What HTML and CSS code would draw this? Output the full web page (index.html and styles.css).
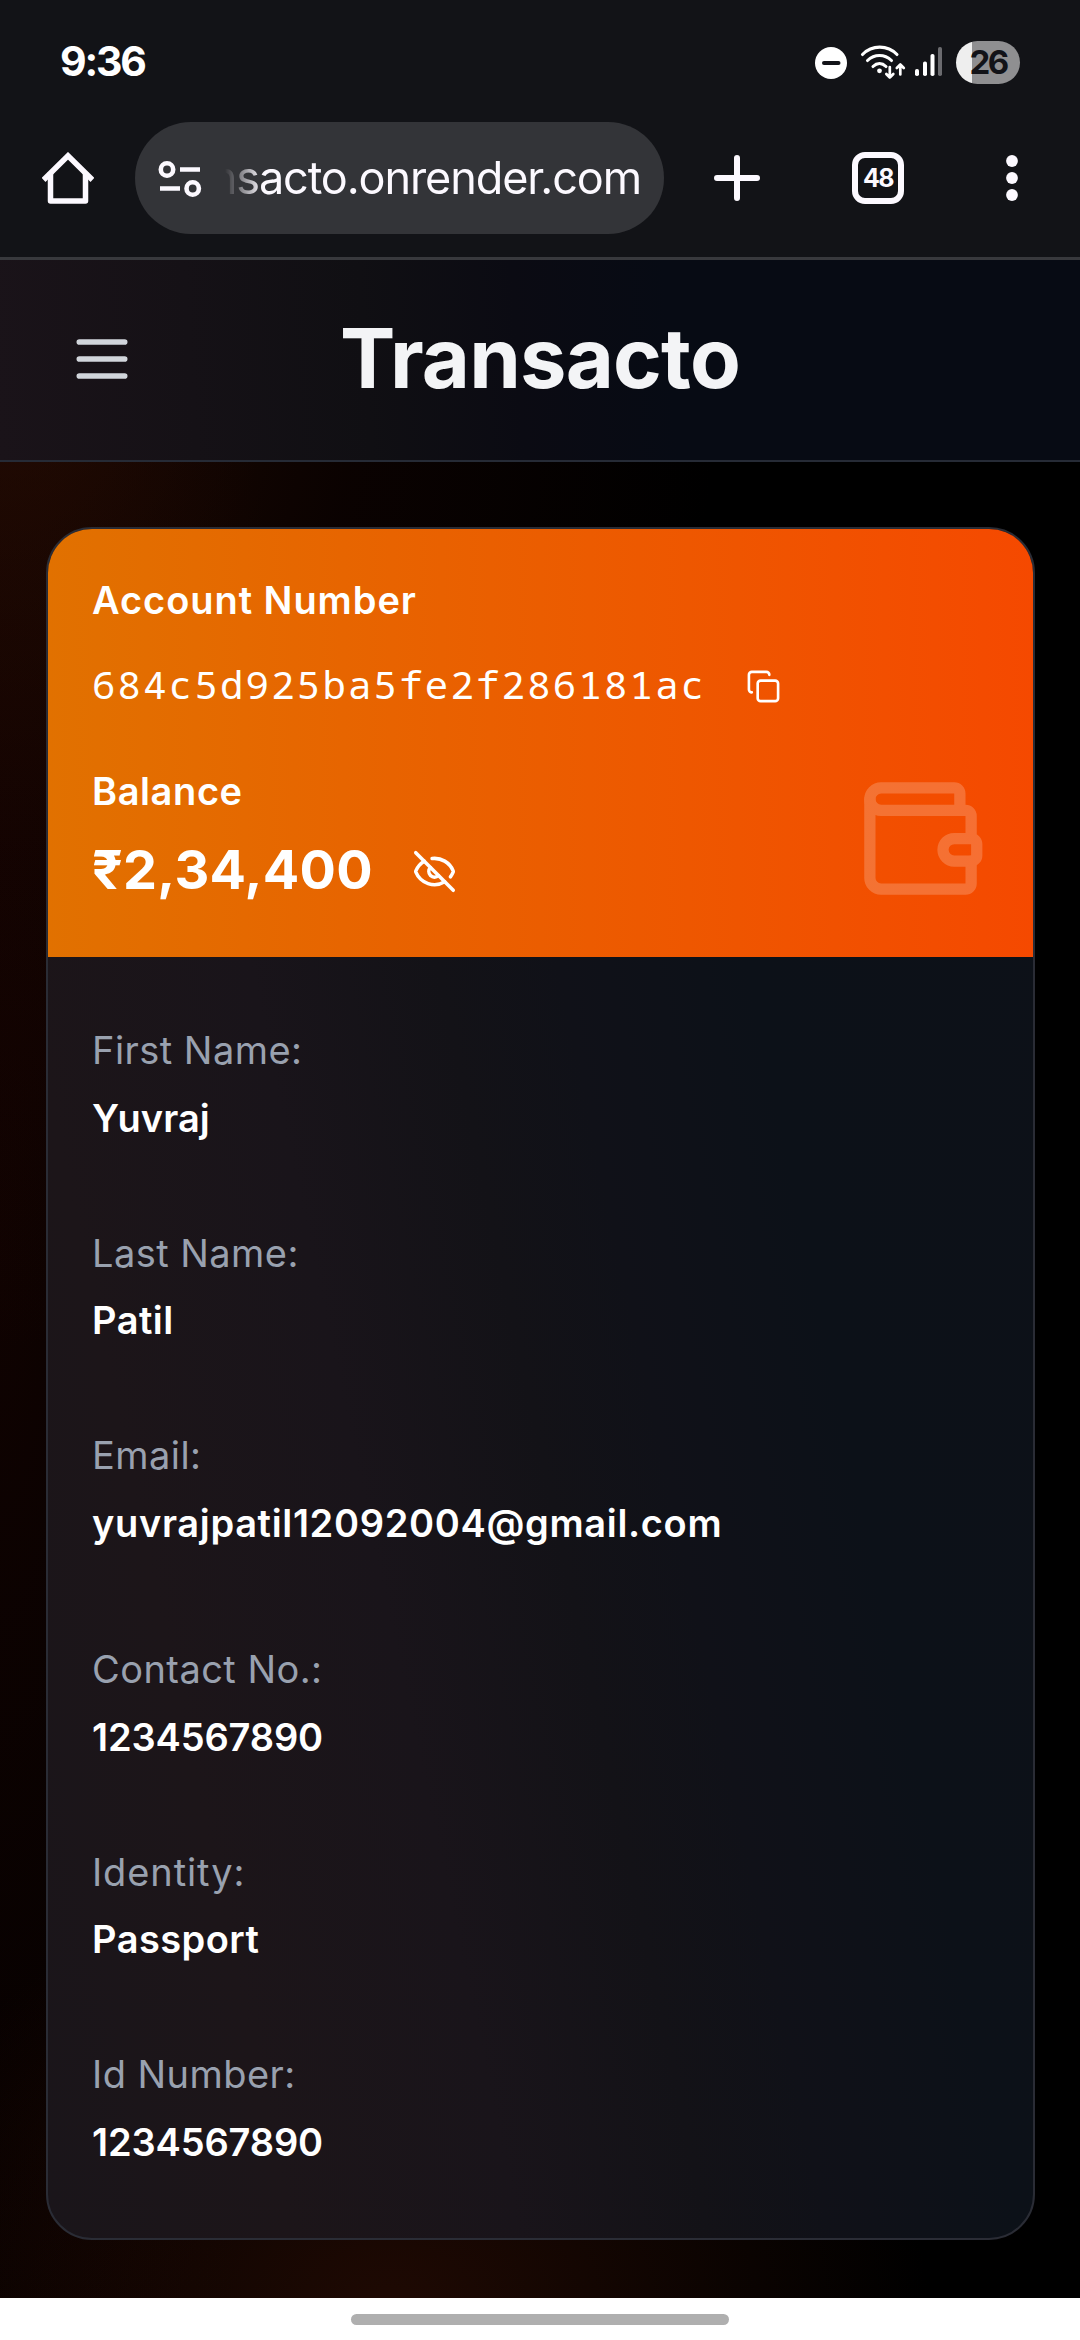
FILE: index.html
```html
<!DOCTYPE html>
<html lang="en">
<head>
<meta charset="utf-8">
<title>Transacto</title>
<link rel="stylesheet" href="styles.css">
</head>
<body>
<div class="status">
  <span class="clock">9:36</span>
  <div class="indicators">
    <svg class="dnd" viewBox="0 0 32 32"><circle cx="16" cy="16" r="16" fill="#fff"/><path d="M9 16h14.500" stroke="#121318" stroke-width="4" stroke-linecap="round"/></svg>
    <svg class="wifi" viewBox="0 0 46 36" fill="none" stroke="#fff" stroke-width="3.100" stroke-linecap="round" stroke-linejoin="round">
      <path d="M2.500 10.500C12 0.700 27.500 0.700 37 10.500"/><path d="M7.500 16.500C14.500 9.800 24.500 9.800 31.500 16.500"/><path d="M13 22.500C17 18.700 22 18.700 26 22.500"/>
      <circle cx="19.500" cy="26.800" r="2.400" fill="#fff" stroke="none"/>
      <path stroke-width="2.700" d="M29.800 23v10.500M26.300 30l3.500 3.500 3.500-3.500M40.300 30.500V20.500M36.800 24l3.500-3.500 3.500 3.500"/>
    </svg>
    <svg class="signal" viewBox="0 0 28 32" fill="#fff"><rect x="0" y="23" width="4" height="7" rx="1.800"/><rect x="8" y="15.500" width="4" height="14.500" rx="1.800"/><rect x="15.500" y="8" width="4" height="22" rx="1.800"/><rect x="23" y="1" width="4" height="29" rx="1.800" fill="#6b6b6f"/></svg>
    <span class="battery">26</span>
  </div>
</div>

<div class="toolbar">
  <svg class="home" viewBox="0 0 52 52" fill="none" stroke="#fcf9ff" stroke-width="5.500" stroke-linejoin="round" stroke-linecap="square"><path stroke-linejoin="miter" d="M3.500 26 26 3.800 48.500 26"/><path d="M8.500 23v26h35V23"/></svg>
  <div class="omnibox">
    <svg class="tune" viewBox="0 0 44 38" fill="none" stroke="#fcf9ff" stroke-width="4.600"><circle cx="9" cy="9.500" r="6.200"/><path d="M22 9.500h20M2 28.500h20"/><circle cx="34.700" cy="28.500" r="6.200"/></svg>
    <div class="url"><span>nsacto.onrender.com</span></div>
  </div>
  <svg class="plus" viewBox="0 0 46 46" stroke="#fcf9ff" stroke-width="6" stroke-linecap="round"><path d="M23 3v40M3 23h40"/></svg>
  <span class="tabs">48</span>
  <svg class="dots" viewBox="0 0 12 48" fill="#fcf9ff"><circle cx="6" cy="7" r="5.900"/><circle cx="6" cy="24" r="5.900"/><circle cx="6" cy="41" r="5.900"/></svg>
</div>

<div class="page">
  <header class="header">
    <svg class="menu" viewBox="0 0 24 24" fill="none" stroke="#d1d5db" stroke-width="2" stroke-linecap="round"><path d="M4 6h16M4 12h16M4 18h16"/></svg>
    <h1 class="brand">Transacto</h1>
  </header>

  <main class="card">
    <section class="summary">
      <div class="title t-account">Account Number</div>
      <div class="account-row">
        <span class="account">684c5d925ba5fe2f286181ac</span>
        <svg class="copy" viewBox="0 0 24 24" fill="none" stroke="#fff" stroke-width="1.800" stroke-linecap="round" stroke-linejoin="round"><rect x="8" y="8" width="14" height="14" rx="2"/><path d="M4 16c-1.100 0-2-.9-2-2V4c0-1.100.9-2 2-2h10c1.100 0 2 .9 2 2"/></svg>
      </div>
      <div class="balance-row">
        <div>
          <div class="title t-balance">Balance</div>
          <div class="amount-row">
            <span class="amount">₹2,34,400</span>
            <svg class="eye" viewBox="0 0 24 24" fill="none" stroke="#fff" stroke-width="1.900" stroke-linecap="round" stroke-linejoin="round"><path d="M10.733 5.076a10.744 10.744 0 0 1 11.205 6.575 1 1 0 0 1 0 .696 10.747 10.747 0 0 1-1.444 2.490"/><path d="M14.084 14.158a3 3 0 0 1-4.242-4.242"/><path d="M17.479 17.499a10.750 10.750 0 0 1-15.417-5.151 1 1 0 0 1 0-.696 10.750 10.750 0 0 1 4.446-5.143"/><path d="m2 2 20 20"/></svg>
          </div>
        </div>
        <svg class="wallet" viewBox="0 0 24 24" fill="none" stroke="#fff" stroke-width="2" stroke-linecap="round" stroke-linejoin="round"><path d="M19 7V4a1 1 0 0 0-1-1H5a2 2 0 0 0 0 4h15a1 1 0 0 1 1 1v4h-3a2 2 0 0 0 0 4h3a1 1 0 0 0 1-1v-2a1 1 0 0 0-1-1"/><path d="M3 5v14a2 2 0 0 0 2 2h15a1 1 0 0 0 1-1v-4"/></svg>
      </div>
    </section>
    <dl class="details">
      <div class="item"><dt>First Name:</dt><dd class="v-first">Yuvraj</dd></div>
      <div class="item"><dt>Last Name:</dt><dd>Patil</dd></div>
      <div class="item item-email"><dt>Email:</dt><dd class="v-email">yuvrajpatil12092004@gmail.com</dd></div>
      <div class="item"><dt>Contact No.:</dt><dd class="v-digits">1234567890</dd></div>
      <div class="item"><dt class="l-identity">Identity:</dt><dd>Passport</dd></div>
      <div class="item"><dt>Id Number:</dt><dd class="v-digits">1234567890</dd></div>
    </dl>
  </main>
</div>
<div class="navbar"><div class="handle"></div></div>
</body>
</html>
```
FILE: styles.css
```css
* { box-sizing: border-box; }
html, body { margin: 0; padding: 0; }
body {
  width: 1080px; height: 2340px; overflow: hidden;
  display: flex; flex-direction: column;
  background: #121317; color: #fff;
  font-family: Inter, "Liberation Sans", sans-serif;
}
svg { display: block; flex: none; }

.status { height: 122px; padding: 0 60px; display: flex; justify-content: space-between; align-items: center; }
.clock { font-size: 41px; font-weight: 700; line-height: 50px; letter-spacing: -2.200px; }
.indicators { display: flex; align-items: center; height: 42px; margin-top: 2px; }
.dnd { width: 32px; height: 32px; margin-right: 13px; margin-top: 2px; }
.wifi { width: 46px; height: 36px; margin-right: 9px; }
.signal { width: 28px; height: 32px; margin-right: 13px; }
.battery {
  width: 64px; height: 43px; border-radius: 22px;
  background: linear-gradient(90deg, #eeeeee 16px, #8f8f91 16px);
  color: #121318; font-size: 33px; font-weight: 700; line-height: 43px; text-align: center; letter-spacing: -2.500px;
}

.toolbar { height: 138px; flex: none; display: flex; align-items: flex-start; padding: 0 0 0 42px; border-bottom: 3px solid #38393d; }
.home { width: 52px; height: 52px; margin: 30px 41px 0 0; }
.omnibox { width: 529px; height: 112px; border-radius: 56px; background: #333438; display: flex; align-items: center; padding-left: 23px; }
.tune { width: 44px; height: 38px; margin-top: 1px; }
.url {
  margin-left: 23px; width: 424px; overflow: hidden; display: flex; justify-content: flex-end; padding-right: 8px;
  -webkit-mask-image: linear-gradient(90deg, transparent 0, #000 38px);
  mask-image: linear-gradient(90deg, transparent 0, #000 38px);
}
.url span { font-size: 45px; line-height: 60px; letter-spacing: -1.100px; color: #fcf9ff; white-space: nowrap; }
.plus { width: 46px; height: 46px; margin: 33px 0 0 50px; }
.tabs {
  width: 52px; height: 52px; margin: 30px 0 0 92px; border: 6px solid #fcf9ff; border-radius: 13px;
  font-size: 25px; font-weight: 700; line-height: 41px; text-align: center; color: #fcf9ff; letter-spacing: -1.500px;
}
.dots { width: 12px; height: 48px; margin: 32px 0 0 102px; }

.page {
  height: 2038px; flex: none;
  background:
    radial-gradient(ellipse 720px 1000px at 0 90px, rgba(76, 26, 6, .40), rgba(64, 12, 5, .16) 50%, transparent 100%),
    radial-gradient(ellipse 300px 1600px at 0 1000px, rgba(64, 10, 4, .24), transparent 100%),
    radial-gradient(ellipse 540px 460px at 390px 2060px, rgba(78, 24, 8, .40), transparent 100%),
    #000;
}
.header {
  height: 202px; border-bottom: 2px solid #262b36; display: grid; grid-template-columns: 135px 1fr 135px; align-items: center;
  background: linear-gradient(86deg, #1a1319 0%, #151116 18%, #100f13 34%, #0b0b13 48%, #070b14 62%, #070b14 100%);
}
.menu { width: 68px; height: 68px; margin-left: 68px; margin-top: -2px; }
.brand { margin: -5px 0 0; font-size: 83px; line-height: 100px; font-weight: 700; color: #f3f4f6; text-align: center; letter-spacing: -.800px; }

.card {
  width: 989px; height: 1713px; margin: 65px 0 0 46px; border: 2px solid #2a2c35; border-radius: 46px; overflow: hidden;
  background: linear-gradient(78deg, #1a151a 0%, #1c1519 18%, #19141a 35%, #131217 49%, #101118 58%, #0c1118 72%, #0d1118 100%);
}
.summary { height: 428px; padding: 43px 45px 51px 44px; background: linear-gradient(90deg, #e17100, #f54900); }
.title { font-size: 38px; line-height: 56px; font-weight: 600; white-space: nowrap; }
.t-account { letter-spacing: .950px; }
.t-balance { letter-spacing: .600px; }
.account-row { display: flex; align-items: center; height: 56px; margin-top: 28px; }
.account { font: 39px/56px "Noto Sans Mono", "DejaVu Sans Mono", monospace; letter-spacing: 2.200px; }
.copy { width: 35px; height: 35px; margin: 5px 0 0 40px; }
.balance-row { display: flex; justify-content: space-between; align-items: flex-end; margin-top: 51px; height: 143px; }
.amount-row { display: flex; align-items: center; margin: 17px 0 2px; height: 68px; }
.amount { font-size: 54px; line-height: 68px; font-weight: 700; letter-spacing: .250px; }
.eye { width: 45px; height: 45px; margin-left: 39px; margin-top: 3px; }
.wallet { width: 135px; height: 135px; opacity: .2; }

.details { margin: 0; padding: 65px 44px 0; }
.item { height: 202.500px; }
.item-email { height: 214px; }
dt, dd { margin: 0; font-size: 38px; line-height: 56px; white-space: nowrap; letter-spacing: .450px; }
dt { color: #99a1af; margin-bottom: 11.500px; }
dd { font-weight: 600; }
.l-identity { letter-spacing: .900px; }
.v-first { letter-spacing: 0; }
.v-email { letter-spacing: .660px; }
.v-digits { letter-spacing: -.150px; }

.navbar { height: 42px; flex: none; background: #fff; display: flex; justify-content: center; padding-top: 16px; }
.handle { width: 378px; height: 11px; border-radius: 6px; background: #afafaf; }
```
